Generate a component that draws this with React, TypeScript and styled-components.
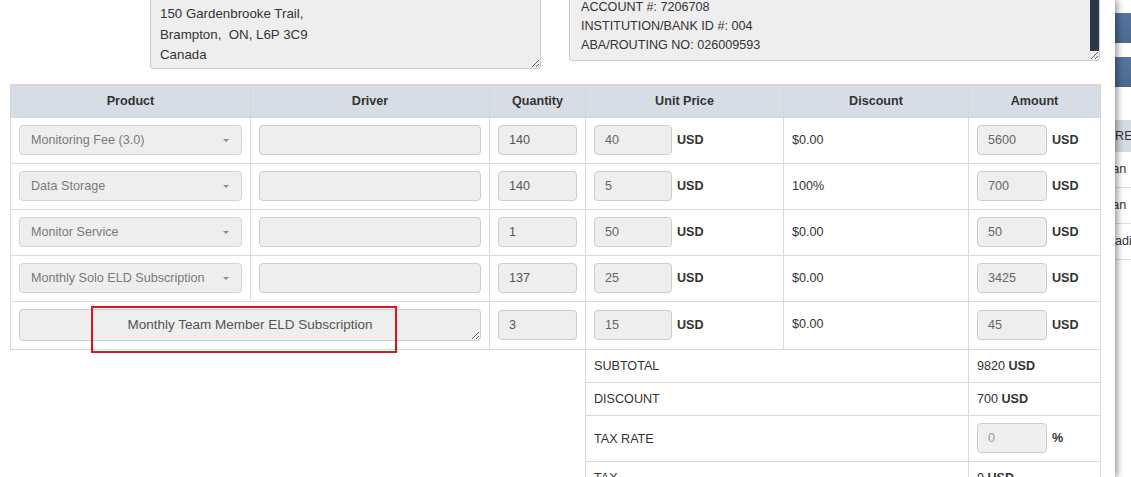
import React from 'react';
import styled, { createGlobalStyle } from 'styled-components';

type Line = {
  product: string;
  qty: number;
  price: number;
  discount: string;
  amount: number;
  custom?: boolean;
};

const LINES: Line[] = [
  { product: 'Monitoring Fee (3.0)', qty: 140, price: 40, discount: '$0.00', amount: 5600 },
  { product: 'Data Storage', qty: 140, price: 5, discount: '100%', amount: 700 },
  { product: 'Monitor Service', qty: 1, price: 50, discount: '$0.00', amount: 50 },
  { product: 'Monthly Solo ELD Subscription', qty: 137, price: 25, discount: '$0.00', amount: 3425 },
  { product: 'Monthly Team Member ELD Subscription', qty: 3, price: 15, discount: '$0.00', amount: 45, custom: true },
];

const BILL_TO = 'NORTHLINE CARRIERS INC.\nATTN: ACCOUNTS PAYABLE\n150 Gardenbrooke Trail,\nBrampton,  ON, L6P 3C9\nCanada';
const BANK = 'BANK: ROYAL BANK OF CANADA\nTRANSIT #: 00102\nACCOUNT #: 7206708\nINSTITUTION/BANK ID #: 004\nABA/ROUTING NO: 026009593';

const App = () => {
  return (
    <Page>
      <GlobalStyle />
      <BackPage>
        <BackHidden />
        <BackColumn>
          <BackButton />
          <BackButton />
          <BackTable>
            <BackHead>CREA</BackHead>
            <BackRow>Jan</BackRow>
            <BackRow>Jan</BackRow>
            <BackRow>Radi</BackRow>
          </BackTable>
        </BackColumn>
      </BackPage>

      <Drawer>
        <AddressRow>
          <BillTo readOnly value={BILL_TO} />
          <BankInfo readOnly value={BANK} />
        </AddressRow>

        <TableWrap>
          <Table>
            <colgroup>
              <col style={{ width: 240 }} />
              <col style={{ width: 239 }} />
              <col style={{ width: 96 }} />
              <col style={{ width: 198 }} />
              <col style={{ width: 185 }} />
              <col style={{ width: 132 }} />
            </colgroup>
            <thead>
              <tr>
                <Th>Product</Th>
                <Th>Driver</Th>
                <Th>Quantity</Th>
                <Th>Unit Price</Th>
                <Th>Discount</Th>
                <Th>Amount</Th>
              </tr>
            </thead>
            <tbody>
              {LINES.map(line => (
                <tr key={line.product}>
                  {line.custom ? (
                    <Td colSpan={2}>
                      <CustomProduct readOnly value={line.product} />
                    </Td>
                  ) : (
                    <>
                      <Td>
                        <Select>
                          <span>{line.product}</span>
                          <Caret />
                        </Select>
                      </Td>
                      <Td>
                        <Field readOnly value="" />
                      </Td>
                    </>
                  )}
                  <Td>
                    <Field readOnly value={line.qty} />
                  </Td>
                  <Td>
                    <Money>
                      <Field readOnly value={line.price} $width={78} $tone="#666" />
                      <Unit>USD</Unit>
                    </Money>
                  </Td>
                  <DiscountCell>{line.discount}</DiscountCell>
                  <Td>
                    <Money>
                      <Field readOnly value={line.amount} $width={70} $tone="#666" />
                      <Unit>USD</Unit>
                    </Money>
                  </Td>
                </tr>
              ))}
              <tr>
                <Blank colSpan={3} />
                <SumLabel colSpan={2}>SUBTOTAL</SumLabel>
                <SumValue>
                  9820 <b>USD</b>
                </SumValue>
              </tr>
              <tr>
                <Blank colSpan={3} />
                <SumLabel colSpan={2}>DISCOUNT</SumLabel>
                <SumValue>
                  700 <b>USD</b>
                </SumValue>
              </tr>
              <tr>
                <Blank colSpan={3} />
                <SumLabel colSpan={2}>TAX RATE</SumLabel>
                <Td>
                  <Money>
                    <Field readOnly value={0} $width={70} $tone="#999" />
                    <Unit>%</Unit>
                  </Money>
                </Td>
              </tr>
              <tr>
                <Blank colSpan={3} />
                <SumLabel colSpan={2}>TAX</SumLabel>
                <SumValue>
                  0 <b>USD</b>
                </SumValue>
              </tr>
            </tbody>
          </Table>
          <Highlight />
        </TableWrap>
      </Drawer>
    </Page>
  );
};

const GlobalStyle = createGlobalStyle`
  html, body {
    margin: 0;
    padding: 0;
    height: 100%;
    overflow: hidden;
    background: #fff;
  }
  body {
    font-family: "Liberation Sans", Arial, sans-serif;
    color: #333;
  }
  #root {
    height: 100%;
  }
`;

const Page = styled.div`
  position: relative;
  width: 100%;
  height: 100%;
  overflow: hidden;
`;

/* page behind the drawer, only a sliver shows on the right */
const BackPage = styled.div`
  display: flex;
  height: 100%;
`;

const BackHidden = styled.div`
  flex: 0 0 1100px;
`;

const BackColumn = styled.div`
  flex: 1;
  min-width: 0;
  display: flex;
  flex-direction: column;
  gap: 14px;
  padding-top: 13px;
`;

const BackButton = styled.div`
  height: 30px;
  background: linear-gradient(#5676a0, #4a6a90);
`;

const BackTable = styled.div`
  margin-top: 19px;
  font-size: 12.6px;
  white-space: nowrap;
  overflow: hidden;
`;

const BackHead = styled.div`
  height: 32px;
  line-height: 32px;
  padding-left: 6px;
  background: #d5dbe3;
  color: #333;
`;

const BackRow = styled.div`
  height: 35px;
  line-height: 35px;
  padding-left: 6px;
  border-bottom: 1px solid #ddd;
  color: #333;
`;

const Drawer = styled.div`
  position: absolute;
  top: 0;
  left: 0;
  bottom: 0;
  width: 1115px;
  box-sizing: border-box;
  padding: 0 15px 0 10px;
  background: #fff;
  box-shadow: 2px 0 7px rgba(0, 0, 0, 0.45);
  overflow: hidden;
`;

const AddressRow = styled.div`
  display: flex;
  align-items: flex-start;
  gap: 28px;
  margin-top: -45px;
  padding-left: 140px;
`;

const AddressBox = styled.textarea`
  box-sizing: border-box;
  background: #eee;
  border: 1px solid #ccc;
  border-radius: 3px;
  color: #333;
  font-family: "Liberation Sans", Arial, sans-serif;
  outline: none;
  margin: 0;
  overflow: hidden;
`;

const BillTo = styled(AddressBox)`
  width: 391px;
  height: 114px;
  padding: 7px 9px;
  font-size: 13.3px;
  line-height: 20.5px;
`;

/* the dark strip is the custom scrollbar of the bank details box */
const BankInfo = styled(AddressBox)`
  width: 531px;
  height: 106px;
  padding: 4px 20px 4px 11px;
  font-size: 12.6px;
  line-height: 19px;
  background:
    linear-gradient(#2e3848, #2e3848) right top / 9px calc(100% - 9px) no-repeat,
    #eee;
`;

const TableWrap = styled.div`
  position: relative;
  margin-top: 15px;
`;

const Table = styled.table`
  width: 1090px;
  table-layout: fixed;
  border-collapse: collapse;
  font-size: 12.6px;
  color: #333;
`;

const Th = styled.th`
  height: 33px;
  padding: 0 8px;
  background: #d7dde5;
  border: 1px solid #d6d6d6;
  font-weight: bold;
  text-align: center;
  box-sizing: border-box;
`;

const Td = styled.td`
  padding: 7px 8px 8px;
  border: 1px solid #dadada;
  vertical-align: middle;
`;

const DiscountCell = styled(Td)`
  vertical-align: top;
  padding-top: 14px;
  line-height: 16px;
`;

const Blank = styled.td`
  border: none;
  padding: 0;
`;

const SumLabel = styled(Td)`
  padding: 8px;
  line-height: 16px;
`;

const SumValue = styled(Td)`
  padding: 8px;
  line-height: 16px;

  b {
    font-weight: bold;
  }
`;

const Field = styled.input<{ $width?: number; $tone?: string }>`
  box-sizing: border-box;
  width: ${p => (p.$width ? `${p.$width}px` : '100%')};
  height: 30px;
  padding: 0 10px;
  margin: 0;
  background: #eee;
  border: 1px solid #ccc;
  border-radius: 4px;
  color: ${p => p.$tone ?? '#555'};
  font-family: "Liberation Sans", Arial, sans-serif;
  font-size: 12.6px;
  outline: none;
`;

const Select = styled.div`
  box-sizing: border-box;
  display: flex;
  align-items: center;
  justify-content: space-between;
  height: 30px;
  padding: 0 12px 0 11px;
  background: #eee;
  border: 1px solid #d4d4d4;
  border-radius: 4px;
  color: #7a7a7a;
  white-space: nowrap;
  overflow: hidden;
`;

const Caret = styled.span`
  width: 0;
  height: 0;
  border-left: 3px solid transparent;
  border-right: 3px solid transparent;
  border-top: 3px solid #8a8a8a;
`;

const CustomProduct = styled.textarea`
  display: block;
  box-sizing: border-box;
  width: 100%;
  height: 32px;
  padding: 6px 10px;
  margin: 0;
  background: #eee;
  border: 1px solid #ccc;
  border-radius: 4px;
  color: #555;
  font-family: "Liberation Sans", Arial, sans-serif;
  font-size: 13.5px;
  line-height: 18px;
  text-align: center;
  overflow: hidden;
  outline: none;
`;

const Money = styled.div`
  display: flex;
  align-items: center;
  gap: 5px;
`;

const Unit = styled.span`
  font-weight: bold;
  color: #333;
`;

/* red annotation box drawn over the last product cell */
const Highlight = styled.div`
  position: absolute;
  left: 81px;
  top: 222px;
  width: 306px;
  height: 47px;
  box-sizing: border-box;
  border: 2px solid #e0141c;
  pointer-events: none;
`;

export default App;
